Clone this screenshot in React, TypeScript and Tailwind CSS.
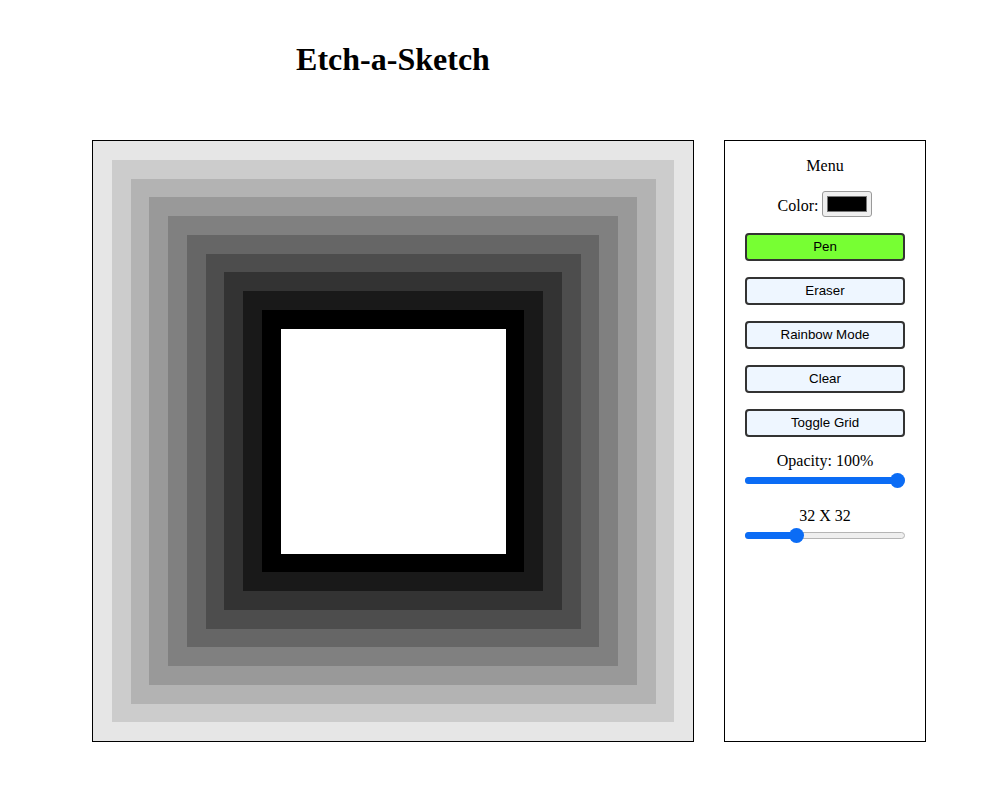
import React from "react";

const SIZE = 32;

function cellColor(r: number, c: number) {
    const ring = Math.min(r, c, SIZE - 1 - r, SIZE - 1 - c);
    if (ring >= 10) return "#ffffff";
    const v = Math.round(255 * (1 - (ring + 1) / 10));
    return `rgb(${v},${v},${v})`;
}

function Slider({ value }: { value: number }) {
    // value 0..1, thumb position along the 160px track
    const left = 8 + value * 144;
    return (
        <div className="relative h-[15px] w-[160px]">
            <div className="absolute left-0 right-0 top-[4px] h-[7px] rounded-full bg-[#efefef] border border-[#b5b5b5]" />
            <div className="absolute left-0 top-[4px] h-[7px] rounded-full bg-[#0b6cf5]" style={{ width: left + 4 }} />
            <div
                className="absolute top-0 h-[15px] w-[15px] rounded-full bg-[#0b6cf5]"
                style={{ left: left - 7.5 }}
            />
        </div>
    );
}

const buttons = ["Pen", "Eraser", "Rainbow Mode", "Clear", "Toggle Grid"];

export default function App() {
    const cells = [];
    for (let r = 0; r < SIZE; r++) {
        for (let c = 0; c < SIZE; c++) {
            cells.push(<div key={r + "-" + c} style={{ background: cellColor(r, c) }} />);
        }
    }

    return (
        <div className="min-h-[809px] bg-white text-black font-['Liberation_Serif',serif]">
            <div className="flex items-start gap-[30px] pl-[92px]">
                <div className="flex flex-col items-center w-[602px]">
                    <h1 className="mt-[41px] text-[32px] leading-[37px] font-bold">Etch-a-Sketch</h1>
                    <div className="mt-[62px] border border-black w-[602px] h-[602px]">
                        <div className="grid grid-cols-[repeat(32,1fr)] grid-rows-[repeat(32,1fr)] w-[600px] h-[600px]">
                            {cells}
                        </div>
                    </div>
                </div>

                <div className="mt-[140px] w-[202px] h-[602px] border border-black flex flex-col items-center px-[20px]">
                    <div className="mt-[16px] text-[16px] leading-[18px]">Menu</div>

                    <div className="mt-[16px] flex items-center gap-[4px] h-[26px]">
                        <span className="text-[16px] leading-[18px] mt-[4px]">Color:</span>
                        <div className="w-[50px] h-[26px] rounded-[3px] border border-[#9a9a9a] bg-[#efefef] p-[4px] flex">
                            <div className="flex-1 bg-black border border-[#777]" />
                        </div>
                    </div>

                    <div className="mt-[16px] flex flex-col gap-[16px] w-[160px]">
                        {buttons.map((b) => (
                            <button
                                key={b}
                                className={
                                    "h-[28px] w-[160px] rounded-[4px] border-2 border-[#333] text-[13.33px] font-['Liberation_Sans',Arial,sans-serif] " +
                                    (b === "Pen" ? "bg-[#77ff33]" : "bg-[#eef6ff]")
                                }
                            >
                                {b}
                            </button>
                        ))}
                    </div>

                    <div className="mt-[15px] text-[16px] leading-[18px]">Opacity: 100%</div>
                    <div className="mt-[3px]">
                        <Slider value={1} />
                    </div>

                    <div className="mt-[19px] text-[16px] leading-[18px]">32 X 32</div>
                    <div className="mt-[3px]">
                        <Slider value={0.305} />
                    </div>
                </div>
            </div>
        </div>
    );
}
